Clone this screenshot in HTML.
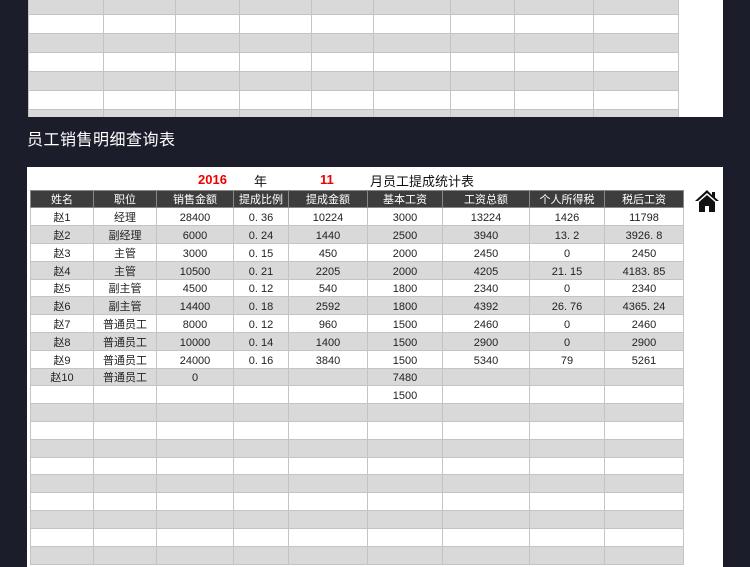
<!DOCTYPE html>
<html><head><meta charset="utf-8"><style>
*{margin:0;padding:0;box-sizing:border-box}
body{width:750px;height:563px;overflow:hidden;background:#1b1d2b;position:relative;font-family:"Liberation Sans","Noto Sans CJK SC",sans-serif}
.p{position:absolute;background:#fff}
table{border-collapse:collapse;table-layout:fixed;position:absolute}
td{border:1px solid #c4c4c4;text-align:center;vertical-align:middle;font-size:11px;line-height:13px;padding-top:3px;color:#222;overflow:hidden;white-space:nowrap}
tr.g td{background:#d9d9d9}
tr.h td{background:#3d3d3d;color:#fff;border-color:#888}
tr{height:18px}
tr.s{height:17px}
</style></head><body>
<div class="p" style="left:28px;top:0;width:695px;height:117px;overflow:hidden">
<table style="left:0;top:-5px;width:650px">
<colgroup><col style="width:75px"><col style="width:72px"><col style="width:64px"><col style="width:72px"><col style="width:62px"><col style="width:77px"><col style="width:64px"><col style="width:79px"><col style="width:85px"></colgroup>
<tr class="g" style="height:19px"><td></td><td></td><td></td><td></td><td></td><td></td><td></td><td></td><td></td></tr>
<tr style="height:19px"><td></td><td></td><td></td><td></td><td></td><td></td><td></td><td></td><td></td></tr>
<tr class="g" style="height:19px"><td></td><td></td><td></td><td></td><td></td><td></td><td></td><td></td><td></td></tr>
<tr style="height:19px"><td></td><td></td><td></td><td></td><td></td><td></td><td></td><td></td><td></td></tr>
<tr class="g" style="height:19px"><td></td><td></td><td></td><td></td><td></td><td></td><td></td><td></td><td></td></tr>
<tr style="height:19px"><td></td><td></td><td></td><td></td><td></td><td></td><td></td><td></td><td></td></tr>
<tr class="g" style="height:19px"><td></td><td></td><td></td><td></td><td></td><td></td><td></td><td></td><td></td></tr>
</table>
</div>
<div style="position:absolute;left:27px;top:126px;color:#fff;font-size:16px;letter-spacing:0.5px">员工销售明细查询表</div>
<div class="p" style="left:27px;top:167px;width:696px;height:400px"></div>
<div style="position:absolute;top:172px;left:198px;font-size:13px;font-weight:bold;color:#e00">2016</div>
<div style="position:absolute;top:171px;left:254px;font-size:13px;color:#111">年</div>
<div style="position:absolute;top:172px;left:320px;font-size:13px;font-weight:bold;color:#e00">11</div>
<div style="position:absolute;top:171px;left:370px;font-size:13px;color:#111">月员工提成统计表</div>
<svg style="position:absolute;left:694px;top:188px" width="26" height="26" viewBox="0 0 26 26"><path d="M13 2 L1 13 L4 13 L13 5 L22 13 L25 13 L21 9.5 V4 H18 V7 Z" fill="#111"/><path d="M5 14 L13 7 L21 14 V24 H15 V18 H11 V24 H5 Z" fill="#111"/></svg>
<table style="left:30px;top:190px;width:653px">
<colgroup><col style="width:63px"><col style="width:63px"><col style="width:77px"><col style="width:55px"><col style="width:79px"><col style="width:75px"><col style="width:87px"><col style="width:75px"><col style="width:79px"></colgroup>
<tr class="h s"><td>姓名</td><td>职位</td><td>销售金额</td><td>提成比例</td><td>提成金额</td><td>基本工资</td><td>工资总额</td><td>个人所得税</td><td>税后工资</td></tr>
<tr><td>赵1</td><td>经理</td><td>28400</td><td>0. 36</td><td>10224</td><td>3000</td><td>13224</td><td>1426</td><td>11798</td></tr>
<tr class="g"><td>赵2</td><td>副经理</td><td>6000</td><td>0. 24</td><td>1440</td><td>2500</td><td>3940</td><td>13. 2</td><td>3926. 8</td></tr>
<tr><td>赵3</td><td>主管</td><td>3000</td><td>0. 15</td><td>450</td><td>2000</td><td>2450</td><td>0</td><td>2450</td></tr>
<tr class="g"><td>赵4</td><td>主管</td><td>10500</td><td>0. 21</td><td>2205</td><td>2000</td><td>4205</td><td>21. 15</td><td>4183. 85</td></tr>
<tr class="s"><td>赵5</td><td>副主管</td><td>4500</td><td>0. 12</td><td>540</td><td>1800</td><td>2340</td><td>0</td><td>2340</td></tr>
<tr class="g"><td>赵6</td><td>副主管</td><td>14400</td><td>0. 18</td><td>2592</td><td>1800</td><td>4392</td><td>26. 76</td><td>4365. 24</td></tr>
<tr><td>赵7</td><td>普通员工</td><td>8000</td><td>0. 12</td><td>960</td><td>1500</td><td>2460</td><td>0</td><td>2460</td></tr>
<tr class="g"><td>赵8</td><td>普通员工</td><td>10000</td><td>0. 14</td><td>1400</td><td>1500</td><td>2900</td><td>0</td><td>2900</td></tr>
<tr><td>赵9</td><td>普通员工</td><td>24000</td><td>0. 16</td><td>3840</td><td>1500</td><td>5340</td><td>79</td><td>5261</td></tr>
<tr class="g s"><td>赵10</td><td>普通员工</td><td>0</td><td></td><td></td><td>7480</td><td></td><td></td><td></td></tr>
<tr><td></td><td></td><td></td><td></td><td></td><td>1500</td><td></td><td></td><td></td></tr>
<tr class="g"><td></td><td></td><td></td><td></td><td></td><td></td><td></td><td></td><td></td></tr>
<tr><td></td><td></td><td></td><td></td><td></td><td></td><td></td><td></td><td></td></tr>
<tr class="g"><td></td><td></td><td></td><td></td><td></td><td></td><td></td><td></td><td></td></tr>
<tr class="s"><td></td><td></td><td></td><td></td><td></td><td></td><td></td><td></td><td></td></tr>
<tr class="g"><td></td><td></td><td></td><td></td><td></td><td></td><td></td><td></td><td></td></tr>
<tr><td></td><td></td><td></td><td></td><td></td><td></td><td></td><td></td><td></td></tr>
<tr class="g"><td></td><td></td><td></td><td></td><td></td><td></td><td></td><td></td><td></td></tr>
<tr><td></td><td></td><td></td><td></td><td></td><td></td><td></td><td></td><td></td></tr>
<tr class="g"><td></td><td></td><td></td><td></td><td></td><td></td><td></td><td></td><td></td></tr>
</table>
</body></html>
